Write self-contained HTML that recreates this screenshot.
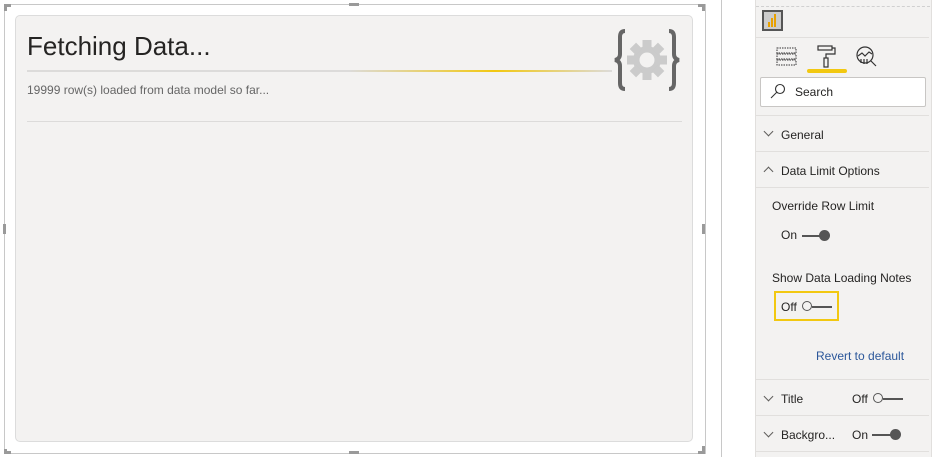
<!DOCTYPE html>
<html><head><style>
body{margin:0;width:940px;height:457px;background:#fff;position:relative;overflow:hidden;font-family:"Liberation Sans",sans-serif;}
.a{position:absolute}
.h{position:absolute;background:#9a9a9a}
.t{position:absolute;font-size:12px;color:#252423;white-space:nowrap}
.sep{position:absolute;left:756px;width:173px;height:1px;background:#e1dfdd}
.chev{position:absolute;width:6px;height:6px;border-right:1.3px solid #605e5c;border-bottom:1.3px solid #605e5c}
</style></head><body>
<div class="a" style="left:4px;top:4px;width:700px;height:448px;border:1px solid #c8c8c8"></div>
<div class="h" style="left:4px;top:4px;width:7px;height:3px"></div><div class="h" style="left:4px;top:4px;width:3px;height:7px"></div>
<div class="h" style="left:698px;top:4px;width:7px;height:3px"></div><div class="h" style="left:702px;top:4px;width:3px;height:7px"></div>
<div class="h" style="left:349px;top:3px;width:10px;height:3px"></div>
<div class="h" style="left:349px;top:451px;width:10px;height:3px"></div>
<div class="h" style="left:3px;top:224px;width:3px;height:10px"></div>
<div class="h" style="left:702px;top:224px;width:3px;height:10px"></div>
<div class="h" style="left:4px;top:449px;width:3px;height:5px"></div><div class="h" style="left:4px;top:451px;width:7px;height:3px"></div>
<div class="h" style="left:702px;top:446px;width:3px;height:7px"></div><div class="h" style="left:698px;top:451px;width:7px;height:3px"></div>
<div class="a" style="left:15px;top:15px;width:676px;height:425px;background:#f3f2f1;border:1px solid #dcdcdc;border-radius:5px"></div>
<div class="t" style="left:27px;top:31px;font-size:26px;color:#252423">Fetching Data...</div>
<div class="a" style="left:27px;top:70px;width:585px;height:2px;background:linear-gradient(90deg,#dcdbda 0,#dcdbda 55%,#f2c811 80%,#dcdbda 100%)"></div>
<div class="t" style="left:27px;top:83px;color:#666">19999 row(s) loaded from data model so far...</div>
<div class="a" style="left:27px;top:121px;width:655px;height:1px;background:#dcdbda"></div>
<svg class="a" style="left:612px;top:27px" width="72" height="66" viewBox="0 0 72 66">
<path d="M13 4 Q8 4 8 10 V27 Q8 32 3 33 Q8 34 8 39 V56 Q8 62 13 62" fill="none" stroke="#666" stroke-width="4"/>
<path d="M57 4 Q62 4 62 10 V27 Q62 32 67 33 Q62 34 62 39 V56 Q62 62 57 62" fill="none" stroke="#666" stroke-width="4"/>
<g transform="translate(35,33)" fill="#cbcbcb">
<circle r="14"/>
<g id="tt"><rect x="-4.5" y="-20" width="9" height="9"/></g>
<use href="#tt" transform="rotate(45)"/><use href="#tt" transform="rotate(90)"/><use href="#tt" transform="rotate(135)"/><use href="#tt" transform="rotate(180)"/><use href="#tt" transform="rotate(225)"/><use href="#tt" transform="rotate(270)"/><use href="#tt" transform="rotate(315)"/>
<circle r="7.5" fill="#f3f2f1"/></g>
</svg>
<div class="a" style="left:721px;top:0;width:1px;height:457px;background:#c8c8c8"></div>
<div class="a" style="left:755px;top:0;width:175px;height:457px;background:#f3f2f1;border-left:1px solid #e1dfdd;border-right:1px solid #e1dfdd"></div>
<div class="a" style="left:756px;top:6px;width:174px;border-top:1px dashed #d0d0d0"></div>
<div class="a" style="left:762px;top:10px;width:21px;height:21px;background:#555"></div>
<div class="a" style="left:764px;top:12px;width:17px;height:17px;background:#ccc"></div>
<div class="a" style="left:768px;top:22px;width:2px;height:5px;background:#e8a000"></div>
<div class="a" style="left:771px;top:18px;width:2px;height:9px;background:#e8a000"></div>
<div class="a" style="left:774px;top:14px;width:2px;height:13px;background:#e8a000"></div>
<div class="sep" style="top:37px"></div>
<svg class="a" style="left:776px;top:45px" width="22" height="22"><g fill="none" stroke="#333" stroke-dasharray="1.5 1"><rect x="1" y="3" width="19" height="5"/><rect x="1" y="9" width="19" height="5"/><rect x="1" y="15" width="19" height="5"/></g></svg>
<svg class="a" style="left:815px;top:44px" width="22" height="24"><g fill="none" stroke="#333" stroke-width="1.2"><rect x="3" y="2" width="14" height="4"/><path d="M17 4h3v6h-9v4"/><rect x="9" y="14" width="4" height="9"/></g></svg>
<div class="a" style="left:807px;top:69px;width:40px;height:4px;border-radius:2px;background:#f2c811"></div>
<svg class="a" style="left:855px;top:45px" width="24" height="22"><g fill="none" stroke="#333" stroke-width="1.2"><circle cx="10" cy="10" r="8"/><path d="M16 16l5 5M3 11l4-3 3 3 4-4 3 2M6 14v4M9 14v5M12 14v5"/></g></svg>
<div class="a" style="left:760px;top:77px;width:164px;height:28px;background:#fff;border:1px solid #c8c6c4;border-radius:2px"></div>
<svg class="a" style="left:770px;top:83px" width="16" height="16"><circle cx="10" cy="6" r="4.5" fill="none" stroke="#333" stroke-width="1.1"/><path d="M7 9l-6 6" stroke="#333" stroke-width="1.1"/></svg>
<div class="t" style="left:795px;top:85px">Search</div>
<div class="sep" style="top:115px"></div>
<div class="chev" style="left:765px;top:128px;transform:rotate(45deg)"></div>
<div class="t" style="left:781px;top:128px">General</div>
<div class="sep" style="top:151px"></div>
<div class="chev" style="left:765px;top:168px;transform:rotate(-135deg)"></div>
<div class="t" style="left:781px;top:164px">Data Limit Options</div>
<div class="sep" style="top:187px"></div>
<div class="t" style="left:772px;top:199px">Override Row Limit</div>
<div class="t" style="left:781px;top:228px">On</div>
<div class="a" style="left:802px;top:235px;width:22px;height:1.5px;background:#555"></div>
<div class="a" style="left:819px;top:230px;width:11px;height:11px;border-radius:50%;background:#555"></div>
<div class="t" style="left:772px;top:271px">Show Data Loading Notes</div>
<div class="a" style="left:774px;top:291px;border:2px solid #f2c811;box-sizing:border-box;width:65px;height:30px"></div>
<div class="t" style="left:781px;top:300px">Off</div>
<div class="a" style="left:802px;top:301px;width:8px;height:8px;border-radius:50%;border:1.5px solid #555"></div>
<div class="a" style="left:812px;top:306px;width:20px;height:1.5px;background:#555"></div>
<div class="t" style="left:816px;top:349px;color:#2b579a">Revert to default</div>
<div class="sep" style="top:379px"></div>
<div class="chev" style="left:765px;top:393px;transform:rotate(45deg)"></div>
<div class="t" style="left:781px;top:392px">Title</div>
<div class="t" style="left:852px;top:392px">Off</div>
<div class="a" style="left:873px;top:393px;width:8px;height:8px;border-radius:50%;border:1.5px solid #555"></div>
<div class="a" style="left:883px;top:398px;width:20px;height:1.5px;background:#555"></div>
<div class="sep" style="top:415px"></div>
<div class="chev" style="left:765px;top:429px;transform:rotate(45deg)"></div>
<div class="t" style="left:781px;top:428px">Backgro...</div>
<div class="t" style="left:852px;top:428px">On</div>
<div class="a" style="left:872px;top:434px;width:22px;height:1.5px;background:#555"></div>
<div class="a" style="left:890px;top:429px;width:11px;height:11px;border-radius:50%;background:#555"></div>
<div class="sep" style="top:451px"></div>
</body></html>
